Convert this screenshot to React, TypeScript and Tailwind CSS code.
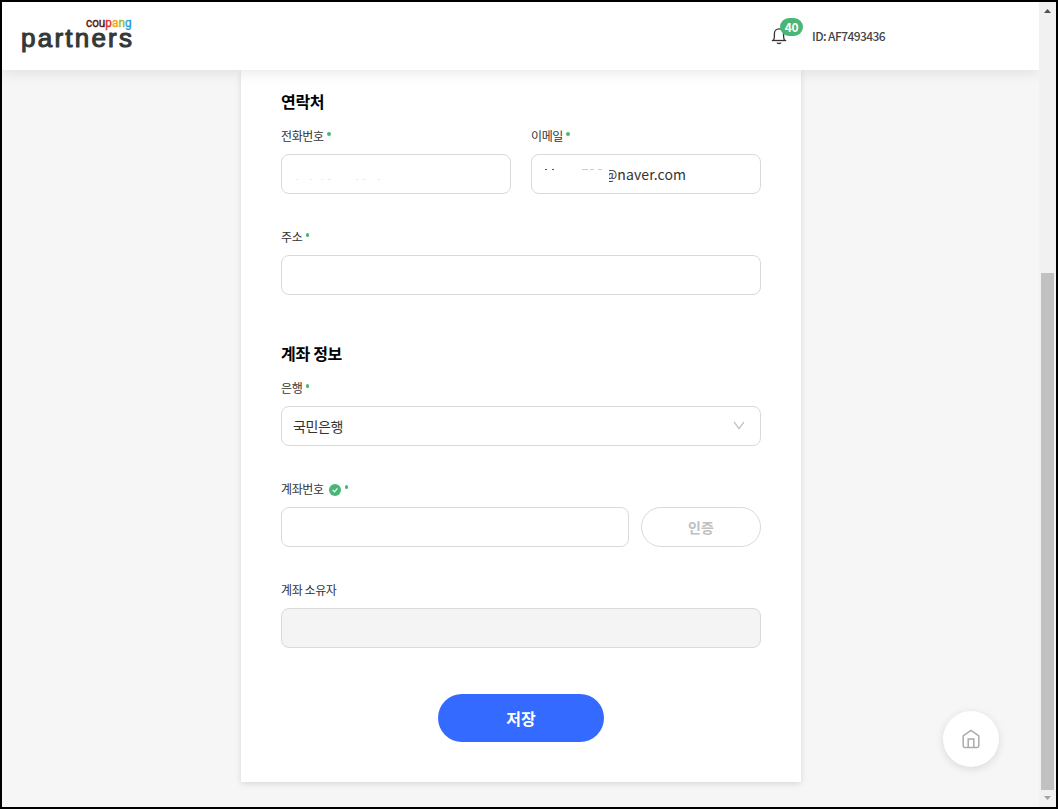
import { ReactNode } from "react";

interface FieldProps {
  label: string;
  required?: boolean;
  verified?: boolean;
  className?: string;
  children: ReactNode;
}

function Logo() {
  return (
    <svg width="116" height="42" viewBox="0 0 116 42" aria-label="coupang partners">
      <text
        x="65"
        y="10.5"
        fontSize="12.5"
        fontWeight="400"
        textLength="45.5"
        lengthAdjust="spacingAndGlyphs"
        fontFamily="Roboto, sans-serif"
        strokeWidth="0.4"
      >
        <tspan fill="#4f1713" stroke="#4f1713">cou</tspan>
        <tspan fill="#e3342b" stroke="#e3342b">p</tspan>
        <tspan fill="#f5a01e" stroke="#f5a01e">a</tspan>
        <tspan fill="#8bc132" stroke="#8bc132">n</tspan>
        <tspan fill="#2f9fe0" stroke="#2f9fe0">g</tspan>
      </text>
      <text
        x="0"
        y="31"
        fontSize="26"
        textLength="111"
        lengthAdjust="spacing"
        fill="#353838"
        stroke="#353838"
        strokeWidth="1.1"
        strokeLinejoin="round"
        fontFamily="'Liberation Sans', sans-serif"
      >
        partners
      </text>
    </svg>
  );
}

function BellIcon() {
  return (
    <svg width="16" height="18" viewBox="0 0 16 18" fill="none" stroke="#333" strokeWidth="1.3">
      <path d="M0.8 13.5h14.4" />
      <path d="M2.7 13.3c0-1 .7-2 .7-4V6.5a4.6 4.6 0 0 1 9.2 0v2.8c0 2 .7 3 .7 4" />
      <path d="M6 15.6c.4 1.2 3.6 1.2 4 0" />
    </svg>
  );
}

function Header() {
  return (
    <header className="relative z-10 flex h-[68px] shrink-0 items-center bg-white shadow-[0_2px_14px_rgba(0,0,0,0.1)]">
      <div className="mt-0.5 ml-[19px]">
        <Logo />
      </div>
      <div className="relative -mt-px ml-[634px]">
        <BellIcon />
        <span className="absolute -top-[9px] left-[9px] flex h-[18px] w-[23px] items-center justify-center rounded-full bg-[#49b675] text-xs font-bold tracking-[-0.3px] text-white">
          40
        </span>
      </div>
      <span className="-mt-px ml-[25px] text-xs font-medium tracking-[-0.57px] text-[#444]">ID: AF7493436</span>
    </header>
  );
}

function Field({ label, required, verified, className = "", children }: FieldProps) {
  return (
    <div className={className}>
      <div className="mb-2 flex h-5 items-center text-xs tracking-[-0.4px] text-[#333]">
        <span>{label}</span>
        {verified && (
          <svg className="ml-[5.5px] mt-px" width="12" height="12" viewBox="0 0 12 12" fill="none">
            <circle cx="6" cy="6" r="6" fill="#49b675" />
            <path d="M3.6 5.8l1.9 2 2.9-3.5" stroke="#fff" strokeWidth="1.1" />
          </svg>
        )}
        {required && <span className="mb-1 ml-[3.5px] size-[3.5px] rounded-full bg-[#49b675]" />}
      </div>
      {children}
    </div>
  );
}

const box = "flex h-10 w-full items-center rounded-lg border border-[#d9d9d9] text-sm text-[#333]";

function ProfileForm() {
  return (
    <div className="ml-[239px] h-[712px] w-[560px] bg-white px-10 pt-[19px] shadow-[0_2px_6px_rgba(0,0,0,0.12)]">
      <h2 className="mb-[13px] h-6 text-base leading-6 font-bold tracking-[-0.3px] text-black">연락처</h2>
      <div className="flex gap-5">
        <Field label="전화번호" required className="w-[230px]">
          <div className={box}>
            <svg className="ml-3 mt-3" width="90" height="2" fill="#ececec">
              <path d="M2 0h2v1h-2zM16 0h2v1h-2zM27 0h2v1h-2zM34 0h3v1h-3zM62 0h2v1h-2zM69 0h3v1h-3zM84 0h2v1h-2z" />
            </svg>
          </div>
        </Field>
        <Field label="이메일" required className="w-[230px]">
          <div className={box}>
            <svg className="ml-3 -mt-[9px]" width="65" height="2">
              <path d="M1 0h2v1h-2zM8 0h2v1h-2z" fill="#555" />
              <path d="M38 0h6v1h-6zM46 0h4v1h-4zM54 0h4v1h-4z" fill="#ccc" />
            </svg>
            <span className="-mt-px flex overflow-hidden">
              <span className="-ml-[5px] tracking-[0.1px]">@naver.com</span>
            </span>
          </div>
        </Field>
      </div>
      <Field label="주소" required className="mt-[33px]">
        <div className={box} />
      </Field>

      <h2 className="mt-[46px] mb-[13px] h-6 text-base leading-6 font-bold tracking-[-0.3px] text-black">
        계좌 정보
      </h2>
      <Field label="은행" required>
        <div className={`${box} justify-between pr-[15px] pl-[11px]`}>
          <span className="tracking-[-0.4px]">국민은행</span>
          <svg className="-mt-px" width="12" height="9" viewBox="0 0 12 9" fill="none" stroke="#bfbfbf" strokeWidth="1.2">
            <path d="M1 0.8l5 6.9 5-6.9" />
          </svg>
        </div>
      </Field>
      <Field label="계좌번호" required verified className="mt-[33px]">
        <div className="flex gap-3">
          <div className={box} />
          <button className="h-10 w-[120px] shrink-0 rounded-full border border-[#d9d9d9] text-sm font-bold text-[#bfbfbf]">
            인증
          </button>
        </div>
      </Field>
      <Field label="계좌 소유자" className="mt-[33px]">
        <div className={`${box} bg-[#f4f4f4]`} />
      </Field>
      <div className="mt-[46px] flex justify-center">
        <button className="h-12 w-[166px] rounded-full bg-[#346aff] text-base font-bold text-white">
          저장
        </button>
      </div>
    </div>
  );
}

function Scrollbar() {
  return (
    <div className="flex w-[17px] shrink-0 flex-col items-center bg-[#f1f1f1]">
      <svg className="mt-[7px]" width="7" height="4" fill="#505050">
        <path d="M0 4L3.5 0L7 4z" />
      </svg>
      <div className="mt-[260px] h-[517px] w-[13px] bg-[#c1c1c1]" />
      <svg className="mt-[6px]" width="7" height="4" fill="#a3a3a3">
        <path d="M0 0h7L3.5 4z" />
      </svg>
    </div>
  );
}

export default function App() {
  return (
    <div className="flex h-[809px] w-[1058px] overflow-hidden border-2 border-black bg-[#f6f6f6] font-['Noto_Sans_CJK_KR',sans-serif]">
      <div className="relative flex w-[1037px] flex-col overflow-hidden">
        <Header />
        <ProfileForm />
        <button className="absolute top-[709px] left-[941px] flex size-14 items-center justify-center rounded-full bg-white shadow-[0_2px_8px_rgba(0,0,0,0.12)]">
          <svg width="18" height="20" viewBox="0 0 18 20" fill="none" stroke="#a9abad" strokeWidth="1.5">
            <path d="M1.2 6.8L9 1.4l7.8 5.4v10.3a1.4 1.4 0 0 1-1.4 1.4H2.6a1.4 1.4 0 0 1-1.4-1.4z" strokeLinejoin="round" />
            <path d="M6.2 18.4V10h5.6v8.4" />
          </svg>
        </button>
      </div>
      <Scrollbar />
    </div>
  );
}
